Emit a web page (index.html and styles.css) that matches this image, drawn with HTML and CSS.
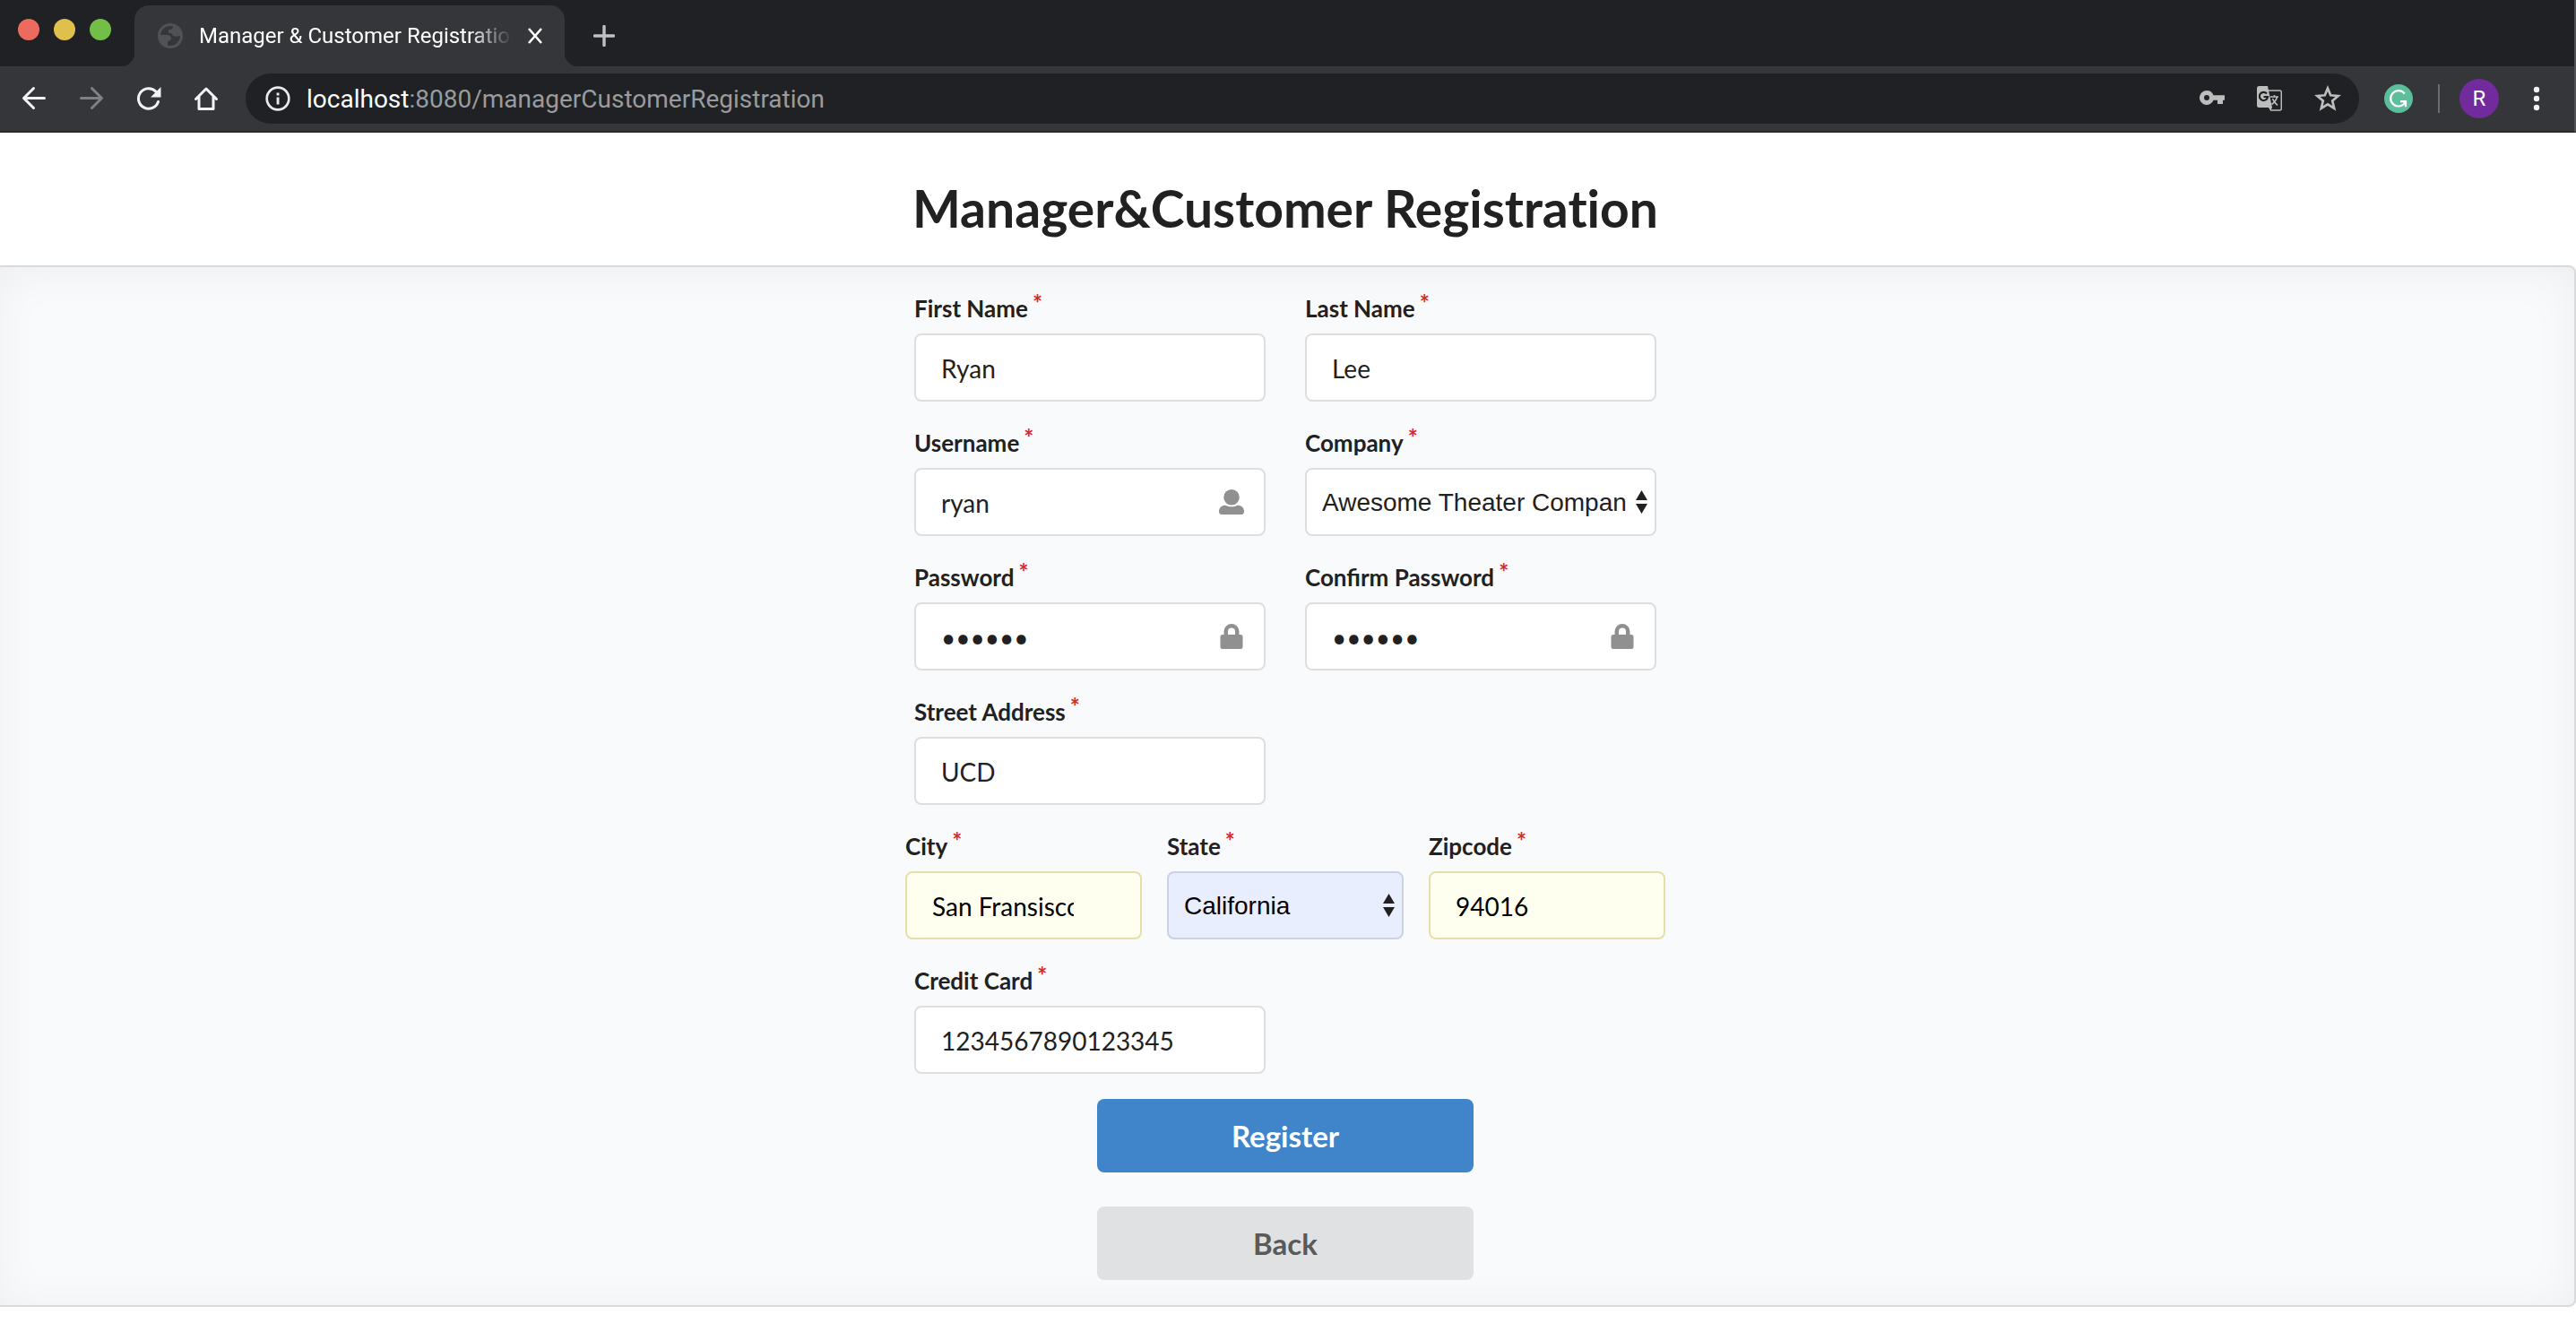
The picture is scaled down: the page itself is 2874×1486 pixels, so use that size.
FILE: index.html
```html
<!DOCTYPE html>
<html lang="en">
<head>
<meta charset="utf-8">
<meta name="viewport" content="width=device-width, initial-scale=1">
<title>Manager &amp; Customer Registration</title>
<link rel="stylesheet" href="styles.css">
</head>
<body>
<header class="browser">
  <div class="tab-strip">
    <div class="window-controls">
      <button class="dot dot-close" type="button" aria-label="Close window"></button>
      <button class="dot dot-min" type="button" aria-label="Minimize window"></button>
      <button class="dot dot-max" type="button" aria-label="Zoom window"></button>
    </div>
    <div class="tab">
      <svg class="favicon" viewBox="0 0 28 28" aria-hidden="true"><circle cx="14" cy="14" r="12.500" fill="#35363a" stroke="#515256" stroke-width="3"/><path d="M1 13h9c3 0 5 1.500 5 4 0 2-2 2-4 3v6C5 26 1 20 1 13zM17 3c0 3-1 4-4 4-1 0-1 2-1 3 0 2 3 0 4 2 1 3 4 3 9 2l2-1C27 7 22 3 17 3z" fill="#515256"/></svg>
      <span class="tab-title">Manager &amp; Customer Registration</span>
      <button class="icon-btn tab-close" type="button" aria-label="Close tab"><svg width="18" height="18" viewBox="0 0 18 18"><path d="M2 1l14 16M16 1L2 17" stroke="#fff" stroke-width="2.6"/></svg></button>
    </div>
    <button class="icon-btn" type="button" aria-label="New tab"><svg width="24" height="24" viewBox="0 0 24 24"><path d="M12 1.500v21M1.500 12h21" stroke="#bdc1c6" stroke-width="3.400" stroke-linecap="round"/></svg></button>
  </div>
  <div class="toolbar">
    <nav class="nav-buttons">
      <button class="icon-btn" type="button" aria-label="Back"><svg width="28" height="28" viewBox="0 0 28 28" fill="none" stroke="#f1f3f4" stroke-width="3" stroke-linecap="round" stroke-linejoin="round"><path d="M25.500 13.500H3M13.500 2.500L2.500 13.500l11 11"/></svg></button>
      <button class="icon-btn" type="button" aria-label="Forward"><svg width="28" height="28" viewBox="0 0 28 28" fill="none" stroke="#808184" stroke-width="3" stroke-linecap="round" stroke-linejoin="round"><path d="M2.500 13.500H25M14.500 2.500l11 11-11 11"/></svg></button>
      <button class="icon-btn" type="button" aria-label="Reload"><svg width="28" height="28" viewBox="0 0 28 28"><path d="M24.500 17.500A11.300 11.300 0 1 1 22 6.200" fill="none" stroke="#f1f3f4" stroke-width="3" stroke-linecap="round"/><path d="M27.500 1v11.500H16z" fill="#f1f3f4"/></svg></button>
      <button class="icon-btn" type="button" aria-label="Home"><svg width="28" height="28" viewBox="0 0 28 28"><path d="M2.500 14.500L14 3l11.500 11.500M6 12v13.500h16V12" fill="none" stroke="#f1f3f4" stroke-width="3" stroke-linecap="round" stroke-linejoin="round"/></svg></button>
    </nav>
    <div class="omnibox">
      <svg class="info" width="28" height="28" viewBox="0 0 28 28" aria-hidden="true"><circle cx="14" cy="14" r="12.300" fill="none" stroke="#e8eaed" stroke-width="2.700"/><path d="M12.600 12.500h2.900v8h-2.900zM12.600 7.500h2.900v3h-2.900z" fill="#e8eaed"/></svg>
      <div class="url"><span class="host">localhost</span>:8080/managerCustomerRegistration</div>
      <div class="page-actions">
        <button class="icon-btn" type="button" aria-label="Saved passwords"><svg width="28" height="28" viewBox="0 0 28 28"><path fill-rule="evenodd" d="M8 5a8 8 0 0 1 7.500 5.300H28v5.400h-2V20h-6v-4.300h-4.500A8 8 0 1 1 8 5zm0 5a3 3 0 1 0 0 6 3 3 0 0 0 0-6z" fill="#bdbdbd"/></svg></button>
        <button class="icon-btn" type="button" aria-label="Translate this page"><svg width="28" height="28" viewBox="0 0 28 28"><path d="M13 5h12.500a1.800 1.800 0 0 1 1.800 1.800v18.400a1.800 1.800 0 0 1-1.800 1.800H15" fill="none" stroke="#bdbdbd" stroke-width="1.500"/><path d="M2.500 0H12l5 24 -2 3.500L13 24H2.500A2.500 2.500 0 0 1 0 21.500v-19A2.500 2.500 0 0 1 2.500 0z" fill="#bdbdbd"/><path d="M11 8.500A4.600 4.600 0 1 0 12 12H7.500" fill="none" stroke="#202124" stroke-width="2.200"/><path d="M15 12h9M19.500 10v2M22.500 12c-1 4-4 7-6 8.500M17.500 14c1 3 3 5 5.500 7.500" fill="none" stroke="#bdbdbd" stroke-width="1.600"/></svg></button>
        <button class="icon-btn" type="button" aria-label="Bookmark this page"><svg width="30" height="30" viewBox="0 0 30 30"><path d="M15 3.500l3.200 7.800 8.400.7-6.400 5.500 2 8.300-7.200-4.500-7.200 4.500 2-8.300L3.400 12l8.400-.7z" fill="none" stroke="#bdbdbd" stroke-width="2.700"/></svg></button>
      </div>
    </div>
    <div class="extensions">
      <button class="icon-btn" type="button" aria-label="Grammarly"><svg width="32" height="32" viewBox="0 0 32 32"><circle cx="16" cy="16" r="16" fill="#5bbf9c"/><path d="M22.800 10.500A8.700 8.700 0 1 0 23.500 20M18 19.200h6v6" fill="none" stroke="#fff" stroke-width="2.200"/></svg></button>
      <span class="divider"></span>
      <button class="avatar" type="button" aria-label="Profile">R</button>
      <button class="icon-btn menu" type="button" aria-label="Menu"><svg width="8" height="28" viewBox="0 0 8 28" fill="#f1f3f4"><circle cx="4" cy="4" r="3.200"/><circle cx="4" cy="14" r="3.200"/><circle cx="4" cy="24" r="3.200"/></svg></button>
    </div>
  </div>
</header>
<main class="page">
  <h1 class="title">Manager&amp;Customer Registration</h1>
  <form class="segment">
    <div class="row">
      <div class="field"><label for="first">First Name</label><input id="first" type="text" value="Ryan"></div>
      <div class="field"><label for="last">Last Name</label><input id="last" type="text" value="Lee"></div>
    </div>
    <div class="row">
      <div class="field"><label for="user">Username</label>
        <div class="control"><input id="user" type="text" value="ryan"><svg class="field-icon" viewBox="0 0 28 28" aria-hidden="true"><circle cx="14" cy="8.800" r="8.800"/><path d="M7.500 17.800c4 2 9 2 13 0 4.500 0 7.500 2.200 7.500 7 0 2-1 3.200-3 3.200H3c-2 0-3-1.200-3-3.200 0-4.800 3-7 7.500-7z"/></svg></div></div>
      <div class="field"><label for="company">Company</label>
        <div class="control"><select id="company"><option>Awesome Theater Company</option></select><svg class="arrows" viewBox="0 0 13 26" aria-hidden="true"><path d="M6.500 0L13 11H0zM0 15h13L6.500 26z"/></svg></div></div>
    </div>
    <div class="row">
      <div class="field"><label for="pass">Password</label>
        <div class="control"><input id="pass" type="password" value="secret"><svg class="field-icon" viewBox="0 0 28 28" aria-hidden="true"><path fill-rule="evenodd" d="M5.500 12V8.500a8.500 8.500 0 0 1 17 0V12H24a2.500 2.500 0 0 1 2.500 2.500v11A2.500 2.500 0 0 1 24 28H4a2.500 2.500 0 0 1-2.500-2.500v-11A2.500 2.500 0 0 1 4 12zm4.500 0h8V8.500a4 4 0 0 0-8 0z"/></svg></div></div>
      <div class="field"><label for="confirm">Confirm Password</label>
        <div class="control"><input id="confirm" type="password" value="secret"><svg class="field-icon" viewBox="0 0 28 28" aria-hidden="true"><path fill-rule="evenodd" d="M5.500 12V8.500a8.500 8.500 0 0 1 17 0V12H24a2.500 2.500 0 0 1 2.500 2.500v11A2.500 2.500 0 0 1 24 28H4a2.500 2.500 0 0 1-2.500-2.500v-11A2.500 2.500 0 0 1 4 12zm4.500 0h8V8.500a4 4 0 0 0-8 0z"/></svg></div></div>
    </div>
    <div class="row">
      <div class="field"><label for="street">Street Address</label><input id="street" type="text" value="UCD"></div>
    </div>
    <div class="row row-three">
      <div class="field"><label for="city">City</label><input class="filled" id="city" type="text" value="San Fransisco"></div>
      <div class="field"><label for="state">State</label>
        <div class="control"><select class="filled-select" id="state"><option>California</option></select><svg class="arrows" viewBox="0 0 13 26" aria-hidden="true"><path d="M6.500 0L13 11H0zM0 15h13L6.500 26z"/></svg></div></div>
      <div class="field"><label for="zip">Zipcode</label><input class="filled" id="zip" type="text" value="94016"></div>
    </div>
    <div class="row">
      <div class="field"><label for="card">Credit Card</label><input id="card" type="text" value="1234567890123345"></div>
    </div>
    <div class="actions">
      <button class="btn btn-primary" type="submit">Register</button>
      <button class="btn" type="button">Back</button>
    </div>
  </form>
</main>
</body>
</html>
```
FILE: styles.css
```css
* { box-sizing: border-box; }
body {
  margin: 0;
  background: #fff;
  color: #212121;
  font-family: Lato, "Liberation Sans", sans-serif;
  font-size: 28px;
  overflow-x: hidden;
}
button, input, select { font: inherit; color: inherit; margin: 0; }
svg { display: block; }

/* Browser window */
.browser {
  background: #35363a;
  border-right: 2px solid #515255;
  border-bottom: 2px solid #28292b;
  font-family: Roboto, "Liberation Sans", sans-serif;
}
.icon-btn { padding: 0; border: 0; background: none; flex: none; }
.tab-strip {
  display: flex;
  align-items: center;
  height: 74px;
  padding-top: 6px;
  background: #202124;
}
.window-controls { display: flex; gap: 16px; padding: 0 26px 14px 20px; }
.dot { width: 24px; height: 24px; padding: 0; border: 0; border-radius: 50%; }
.dot-close { background: #ed6a5e; }
.dot-min { background: #e0c04c; }
.dot-max { background: #72be47; }
.tab {
  position: relative;
  display: flex;
  align-items: center;
  align-self: stretch;
  width: 480px;
  margin-right: 32px;
  padding: 0 24px 0 26px;
  border-radius: 16px 16px 0 0;
  background: #35363a;
}
.tab::before, .tab::after {
  content: "";
  position: absolute;
  bottom: 0;
  width: 16px;
  height: 16px;
}
.tab::before { left: -16px; background: radial-gradient(circle at 0 0, #202124 16px, #35363a 17px); }
.tab::after { right: -16px; background: radial-gradient(circle at 100% 0, #202124 16px, #35363a 17px); }
.favicon { width: 28px; height: 28px; margin-right: 18px; flex: none; }
.tab-title {
  flex: 1;
  overflow: hidden;
  white-space: nowrap;
  font-size: 24px;
  color: #fff;
  -webkit-mask-image: linear-gradient(to right, #000 86%, transparent);
  mask-image: linear-gradient(to right, #000 86%, transparent);
}
.tab-close { margin-left: 16px; }
.toolbar { display: flex; align-items: center; height: 72px; }
.nav-buttons { display: flex; gap: 36px; padding: 0 30px 0 24px; }
.omnibox {
  display: flex;
  align-items: center;
  flex: 1;
  height: 56px;
  padding: 0 20px 0 22px;
  border-radius: 28px;
  background: #202124;
}
.url { flex: 1; padding-left: 18px; color: #9a9b9d; }
.host { color: #fff; }
.page-actions { display: flex; align-items: center; gap: 36px; }
.extensions { display: flex; align-items: center; padding-left: 28px; }
.divider { width: 2px; height: 32px; margin: 0 22px 0 28px; background: #6b6c6f; }
.avatar {
  width: 44px;
  height: 44px;
  padding: 0;
  border: 0;
  border-radius: 50%;
  background: #722b9c;
  color: #fff;
  font-size: 24px;
}
.menu { margin: 0 38px; }

/* Registration page */
.page { margin-left: -6px; }
.title {
  margin: 0;
  padding: 50px 0 30px;
  font-size: 57px;
  line-height: 68px;
  text-align: center;
  font-variant-ligatures: none;
}
.segment {
  display: flex;
  flex-direction: column;
  align-items: center;
  gap: 28px;
  padding: 28px;
  border: 2px solid #d9dadc;
  border-radius: 8px;
  background: #f9fafc;
  box-shadow: inset 0 4px 50px rgba(0, 0, 0, 0.05);
}
.row {
  display: grid;
  grid-template-columns: repeat(2, 1fr);
  gap: 44px;
  width: 828px;
  max-width: 100%;
}
.row-three { grid-template-columns: repeat(3, 1fr); gap: 28px; width: 848px; }
label {
  display: block;
  margin-bottom: 10px;
  font-size: 26px;
  font-weight: 700;
  line-height: 36px;
}
label::after {
  content: "*";
  display: inline-block;
  margin: -6px 0 0 5px;
  vertical-align: top;
  color: #db2828;
}
.control { position: relative; }
input, select {
  display: block;
  width: 100%;
  height: 76px;
  border: 2px solid #dedede;
  border-radius: 8px;
  background: #fff;
}
input { padding: 2px 74px 0 28px; }
select {
  appearance: none;
  padding: 0 31px 0 17px;
  font-family: "Liberation Sans", Arial, sans-serif;
}
.filled { background: #fffff0; border-color: #e5dfa8; color: #000; }
.filled-select { background: #e8eefe; border-color: #cdd2e2; color: #000; }
.field-icon {
  position: absolute;
  top: 24px;
  right: 24px;
  width: 28px;
  height: 28px;
  fill: #909090;
}
.arrows {
  position: absolute;
  top: 25px;
  right: 10px;
  width: 13px;
  height: 26px;
  fill: #212121;
}
.actions { display: grid; gap: 38px; width: 420px; }
.btn {
  height: 82px;
  border: 0;
  border-radius: 8px;
  background: #e0e1e2;
  color: #5a5a5a;
  font-size: 33px;
  font-weight: 700;
}
.btn-primary { background: #4085ca; color: #fff; }
```
